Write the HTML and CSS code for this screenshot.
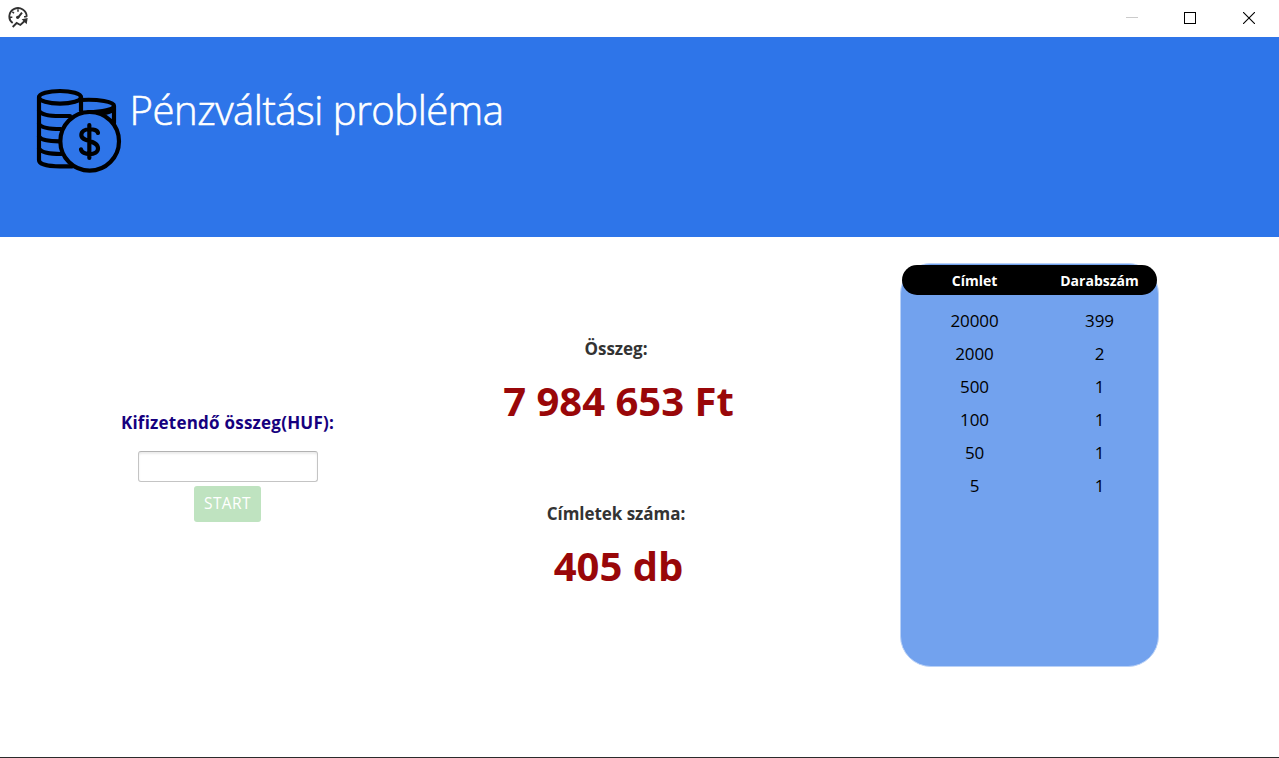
FILE: index.html
```html
<!DOCTYPE html>
<html lang="hu">
<head>
<meta charset="utf-8">
<title>Pénzváltási probléma</title>
<link rel="stylesheet" href="styles.css">
</head>
<body>
<div class="window">
  <div class="titlebar">
    <svg class="app-icon" viewBox="24 21 63 63" fill="none" stroke="#303030" stroke-width="5.5">
      <path d="M38 69A26 25 0 1 1 80 50"/>
      <path d="M54 28v7M29 52h8M37 35l5 5M80 50h-8" stroke-width="4.5"/>
      <path d="M54 53L66 38" stroke-width="6"/>
      <circle cx="53" cy="52" r="5" fill="#303030" stroke="none"/>
      <path d="M38 81L50 69L61 75L74 63"/>
      <path d="M65 58L83 54L80 73z" fill="#303030" stroke="none"/>
    </svg>
    <div class="controls">
      <svg class="control" viewBox="0 0 12 12"><path d="M0 5.5h12" stroke="#cbcbcb"/></svg>
      <svg class="control" viewBox="0 0 12 12"><rect x=".5" y=".5" width="11" height="11" fill="none" stroke="#000"/></svg>
      <svg class="control close" viewBox="0 0 12 12"><path d="M0 0L12 12M12 0L0 12" stroke="#000" stroke-width="1.1"/></svg>
    </div>
  </div>
  <header class="banner">
    <svg class="coins" viewBox="33 24 258 258" fill="none" stroke="#000" stroke-width="12.5" stroke-linecap="round">
      <ellipse cx="105" cy="52" rx="63" ry="19"/>
      <path d="M42 52V240C42 253 70 259 105 259H142"/>
      <path d="M168 52V92"/>
      <path d="M42 92C48 103 75 108 105 108H135M42 132C48 142 72 147 107 147M42 170C48 179 70 184 103 184M42 206C48 216 70 222 109 222"/>
      <path d="M168 60C220 57 267 65 267 77C267 88 232 96 190 96M267 77V130M233 99C248 98 261 93 267 88"/>
      <circle cx="194" cy="184" r="88"/>
      <path d="M193 135V234M219 159C216 143 169 143 169 165C169 188 219 178 219 205C219 229 170 227 168 208"/>
    </svg>
    <h1 class="title">Pénzváltási probléma</h1>
  </header>
  <main class="content">
    <section class="entry">
      <label class="entry-label" for="amount">Kifizetendő összeg(HUF):</label>
      <input class="entry-input" id="amount" type="text">
      <button class="start" type="button">START</button>
    </section>
    <section class="summary">
      <div class="label">Összeg:</div>
      <div class="value">7 984 653 Ft</div>
      <div class="label">Címletek száma:</div>
      <div class="value">405 db</div>
    </section>
    <section class="panel">
      <div class="row head"><span>Címlet</span><span>Darabszám</span></div>
      <div class="rows">
        <div class="row"><span>20000</span><span>399</span></div>
        <div class="row"><span>2000</span><span>2</span></div>
        <div class="row"><span>500</span><span>1</span></div>
        <div class="row"><span>100</span><span>1</span></div>
        <div class="row"><span>50</span><span>1</span></div>
        <div class="row"><span>5</span><span>1</span></div>
      </div>
    </section>
  </main>
</div>
</body>
</html>
```
FILE: styles.css
```css
* { box-sizing: border-box; }
body { margin: 0; background: #fff; font-family: "Segoe UI", "Open Sans", "Noto Sans", sans-serif; overflow: hidden; }
.window { height: 758px; border-bottom: 1px solid #2b2b2b; display: flex; flex-direction: column; }
.titlebar { height: 37px; flex: none; display: flex; justify-content: space-between; padding: 7px 24px 0 8px; }
.app-icon { width: 21px; height: 21px; }
.controls { display: flex; gap: 46px; padding-top: 5px; }
.control { width: 12px; height: 12px; display: block; }
.close { margin-left: 1px; }
.banner { height: 200px; flex: none; background: #2e75e9; display: flex; padding: 51px 0 0 36px; }
.coins { width: 86px; height: 86px; }
.title { margin: -5px 0 0 7.5px; font-size: 40px; line-height: 54px; font-weight: 300; letter-spacing: -.45px; -webkit-text-stroke: .6px #fff; color: #fff; white-space: nowrap; }
.content { flex: 1; display: grid; grid-template-columns: 455px 327px 1fr; }
.entry { display: flex; flex-direction: column; align-items: center; padding-top: 174px; }
.entry-label { font-size: 17px; line-height: 24px; font-weight: 700; letter-spacing: .22px; color: #16007e; white-space: nowrap; }
.entry-input { width: 180px; height: 31px; margin-top: 16px; border: 1px solid #c4c4c4; border-top-color: #b2b2b2; border-radius: 3px; box-shadow: inset 0 2px 2px #ececec; outline: 0; }
.start { width: 67px; height: 36px; margin-top: 4px; padding: 0 0 2px; border: 0; border-radius: 3px; background: #bfe3c0; color: #fff; font: 15.5px/34px "Segoe UI", "Open Sans", sans-serif; letter-spacing: .4px; }
.summary { padding-top: 100px; text-align: center; white-space: nowrap; }
.label { font-size: 17px; line-height: 24px; font-weight: 700; color: #333; margin-right: 5px; letter-spacing: -.05px; }
.value { height: 112px; margin: 13px 0 16px; font-size: 40px; line-height: 54px; font-weight: 700; color: #990709; }
.panel { width: 259px; height: 404px; margin: 26px 0 0 118px; padding: 1px 1px 0; border: 1px solid #b9d1f7; border-radius: 31px; background: #72a2ee; }
.row { display: grid; grid-template-columns: 125px 125px; padding-left: 10px; height: 33px; line-height: 33px; font-size: 17px; letter-spacing: -.1px; text-align: center; color: #000; }
.head { width: 255px; height: 30px; line-height: 31px; border-radius: 15px; background: #000; color: #fff; font-size: 14px; font-weight: 700; letter-spacing: 0; }
.rows { padding-top: 9px; }
```
